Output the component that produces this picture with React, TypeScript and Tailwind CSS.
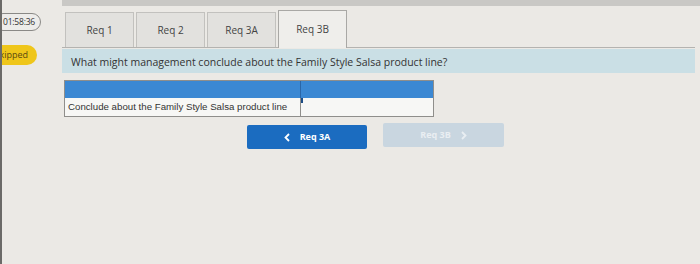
import React from "react";

export default function App() {
  const tabs = ["Req 1", "Req 2", "Req 3A"];
  return (
    <div
      className="w-[700px] h-[264px] bg-[#ebe9e5] flex overflow-hidden border-l-2 border-[#6b6a68]"
      style={{ fontFamily: '"Open Sans", "DejaVu Sans", sans-serif' }}
    >
      {/* left column */}
      <div className="w-[60px] shrink-0 flex flex-col">
        <div className="mt-[13px] ml-[-8px] w-[47px] h-[18px] rounded-full border border-[#8a8986] bg-[#edecea] flex items-center justify-end pr-[5px] text-[8.5px] text-[#333] tracking-[-0.2px]">
          01:58:36
        </div>
        <div className="mt-[14px] ml-[-12px] w-[47px] h-[20px] rounded-r-full bg-[#efc61a] flex items-center justify-end pr-[9px] text-[9px] text-[#5a4a10]">
          kipped
        </div>
      </div>
      {/* main column */}
      <div className="flex-1 flex flex-col">
        <div className="h-[6px] bg-[#c9c8c5]" />
        <div className="flex items-end h-[42px] pl-[3px] border-b border-[#b4b3b0] mr-[5px]">
          {tabs.map((t) => (
            <div
              key={t}
              className="w-[69px] h-[35px] mr-[2px] bg-[#e2e1de] border border-b-0 border-[#c2c1be] flex items-center justify-center text-[10px] text-[#444]"
            >
              {t}
            </div>
          ))}
          <div className="w-[69px] h-[38px] mb-[-1px] bg-[#efeeeb] border border-b-0 border-[#a9a8a5] flex items-center justify-center text-[10px] text-[#444]">
            Req 3B
          </div>
        </div>
        <div className="h-[24px] mt-[1px] mr-[5px] bg-[#cadfe5] flex items-center pl-[9px] pt-[3px] text-[10.5px] text-[#333]">
          What might management conclude about the Family Style Salsa product line?
        </div>
        <div
          className="mt-[7px] ml-[2px] w-[370px] border border-[#8f8e8b]"
          style={{ fontFamily: '"Liberation Sans", Arial, sans-serif' }}
        >
          <div className="flex h-[17px] bg-[#3b88d3]">
            <div className="w-[236px] border-r border-[#2a66a8]" />
            <div className="flex-1" />
          </div>
          <div className="flex h-[18px] bg-[#f7f7f5]">
            <div className="w-[236px] border-r border-[#8f8e8b] flex items-center pl-[3px] text-[9.7px] text-[#333]">
              Conclude about the Family Style Salsa product line
            </div>
            <div className="flex-1 relative">
              <div className="absolute left-0 top-0 w-[2px] h-[5px] bg-[#1c4d86]" />
            </div>
          </div>
        </div>
        <div className="flex mt-[7px] ml-[185px] items-start">
          <div className="w-[120px] h-[24px] mt-[1px] rounded-[2px] bg-[#1b6cc0] flex items-center justify-center gap-[10px] text-white text-[9px] font-bold">
            <svg width="6" height="9" viewBox="0 0 6 9">
              <path d="M5 1 L1.5 4.5 L5 8" stroke="white" strokeWidth="1.8" fill="none" />
            </svg>
            <span>Req 3A</span>
          </div>
          <div className="w-[121px] h-[24px] ml-[16px] mt-[-1px] rounded-[2px] bg-[#c9d6e0] flex items-center justify-center gap-[10px] text-[#e9eef2] text-[9px] font-bold">
            <span>Req 3B</span>
            <svg width="6" height="9" viewBox="0 0 6 9">
              <path d="M1 1 L4.5 4.5 L1 8" stroke="#e9eef2" strokeWidth="1.8" fill="none" />
            </svg>
          </div>
        </div>
      </div>
    </div>
  );
}
